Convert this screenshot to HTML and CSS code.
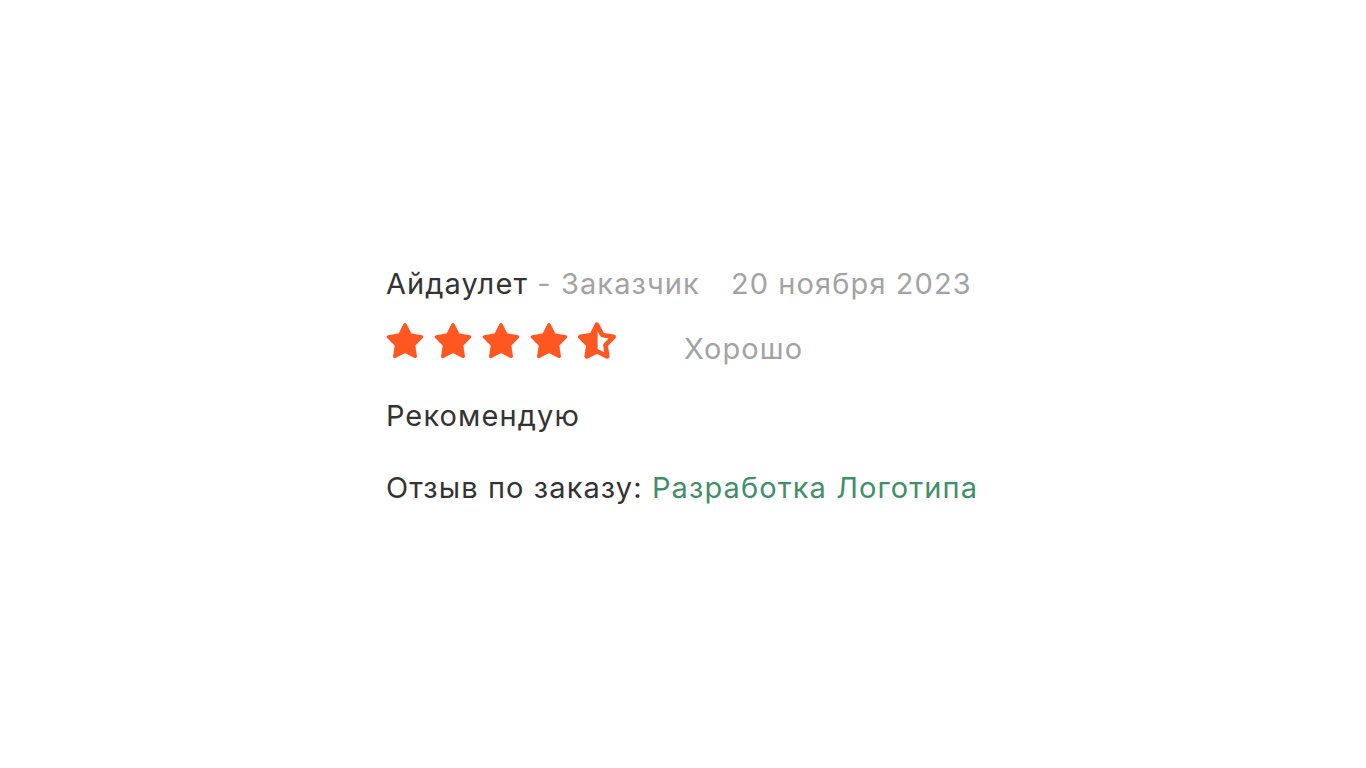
FILE: index.html
```html
<!DOCTYPE html>
<html lang="ru">
<head>
<meta charset="utf-8">
<link rel="stylesheet" href="styles.css">
</head>
<body>
<div class="page">
  <div class="review">
    <div class="head">
      <span class="name">Айдаулет</span><span class="role"> - Заказчик</span>
      <span class="date">20 ноября 2023</span>
    </div>
    <div class="rating">
      <div class="stars">
        <svg class="star" viewBox="0 0 24 24"><polygon points="12,1.8 15.3,8.2 22.46,9.4 17.35,14.6 18.47,21.7 12,18.5 5.53,21.7 6.65,14.6 1.54,9.4 8.7,8.2"/></svg>
        <svg class="star" viewBox="0 0 24 24"><polygon points="12,1.8 15.3,8.2 22.46,9.4 17.35,14.6 18.47,21.7 12,18.5 5.53,21.7 6.65,14.6 1.54,9.4 8.7,8.2"/></svg>
        <svg class="star" viewBox="0 0 24 24"><polygon points="12,1.8 15.3,8.2 22.46,9.4 17.35,14.6 18.47,21.7 12,18.5 5.53,21.7 6.65,14.6 1.54,9.4 8.7,8.2"/></svg>
        <svg class="star" viewBox="0 0 24 24"><polygon points="12,1.8 15.3,8.2 22.46,9.4 17.35,14.6 18.47,21.7 12,18.5 5.53,21.7 6.65,14.6 1.54,9.4 8.7,8.2"/></svg>
        <svg class="star half" viewBox="0 0 24 24">
          <defs><clipPath id="lefthalf"><rect x="0" y="0" width="12.4" height="24"/></clipPath></defs>
          <polygon class="outline" points="12,1.8 15.3,8.2 22.46,9.4 17.35,14.6 18.47,21.7 12,18.5 5.53,21.7 6.65,14.6 1.54,9.4 8.7,8.2"/>
          <polygon clip-path="url(#lefthalf)" points="12,1.8 15.3,8.2 22.46,9.4 17.35,14.6 18.47,21.7 12,18.5 5.53,21.7 6.65,14.6 1.54,9.4 8.7,8.2"/>
        </svg>
      </div>
      <span class="label">Хорошо</span>
    </div>
    <p class="text">Рекомендую</p>
    <p class="order">Отзыв по заказу: <a class="link" href="#">Разработка Логотипа</a></p>
  </div>
</div>
</body>
</html>
```

FILE: styles.css
```css
html, body {
  margin: 0;
  padding: 0;
  background: #ffffff;
}
body {
  font-family: Inter, "Noto Sans", sans-serif;
  color: #333333;
}
.page {
  width: 1366px;
  height: 768px;
  box-sizing: border-box;
  padding-top: 266px;
  padding-right: 2px;
  display: flex;
  justify-content: center;
  align-items: flex-start;
}
.review {
  display: flex;
  flex-direction: column;
  font-size: 29px;
  line-height: 36px;
  letter-spacing: 1.1px;
}
.head {
  display: flex;
  align-items: baseline;
  white-space: pre;
}
.name {
  color: #333333;
}
.role {
  color: #a3a3a3;
}
.date {
  color: #a3a3a3;
  margin-left: 31px;
}
.rating {
  display: flex;
  align-items: flex-start;
  margin-top: 20px;
}
.stars {
  display: flex;
  gap: 10px;
}
.star {
  width: 38px;
  height: 38px;
  display: block;
}
.star polygon {
  fill: #ff5722;
  stroke: #ff5722;
  stroke-width: 2.2;
  stroke-linejoin: round;
}
.star .outline {
  fill: #ffffff;
  stroke-width: 3;
}
.label {
  color: #a3a3a3;
  margin-left: 68px;
  margin-top: 9px;
}
.text {
  margin: 31px 0 0;
}
.order {
  margin: 36px 0 0;
}
.link {
  color: #3f9068;
  text-decoration: none;
}
```
